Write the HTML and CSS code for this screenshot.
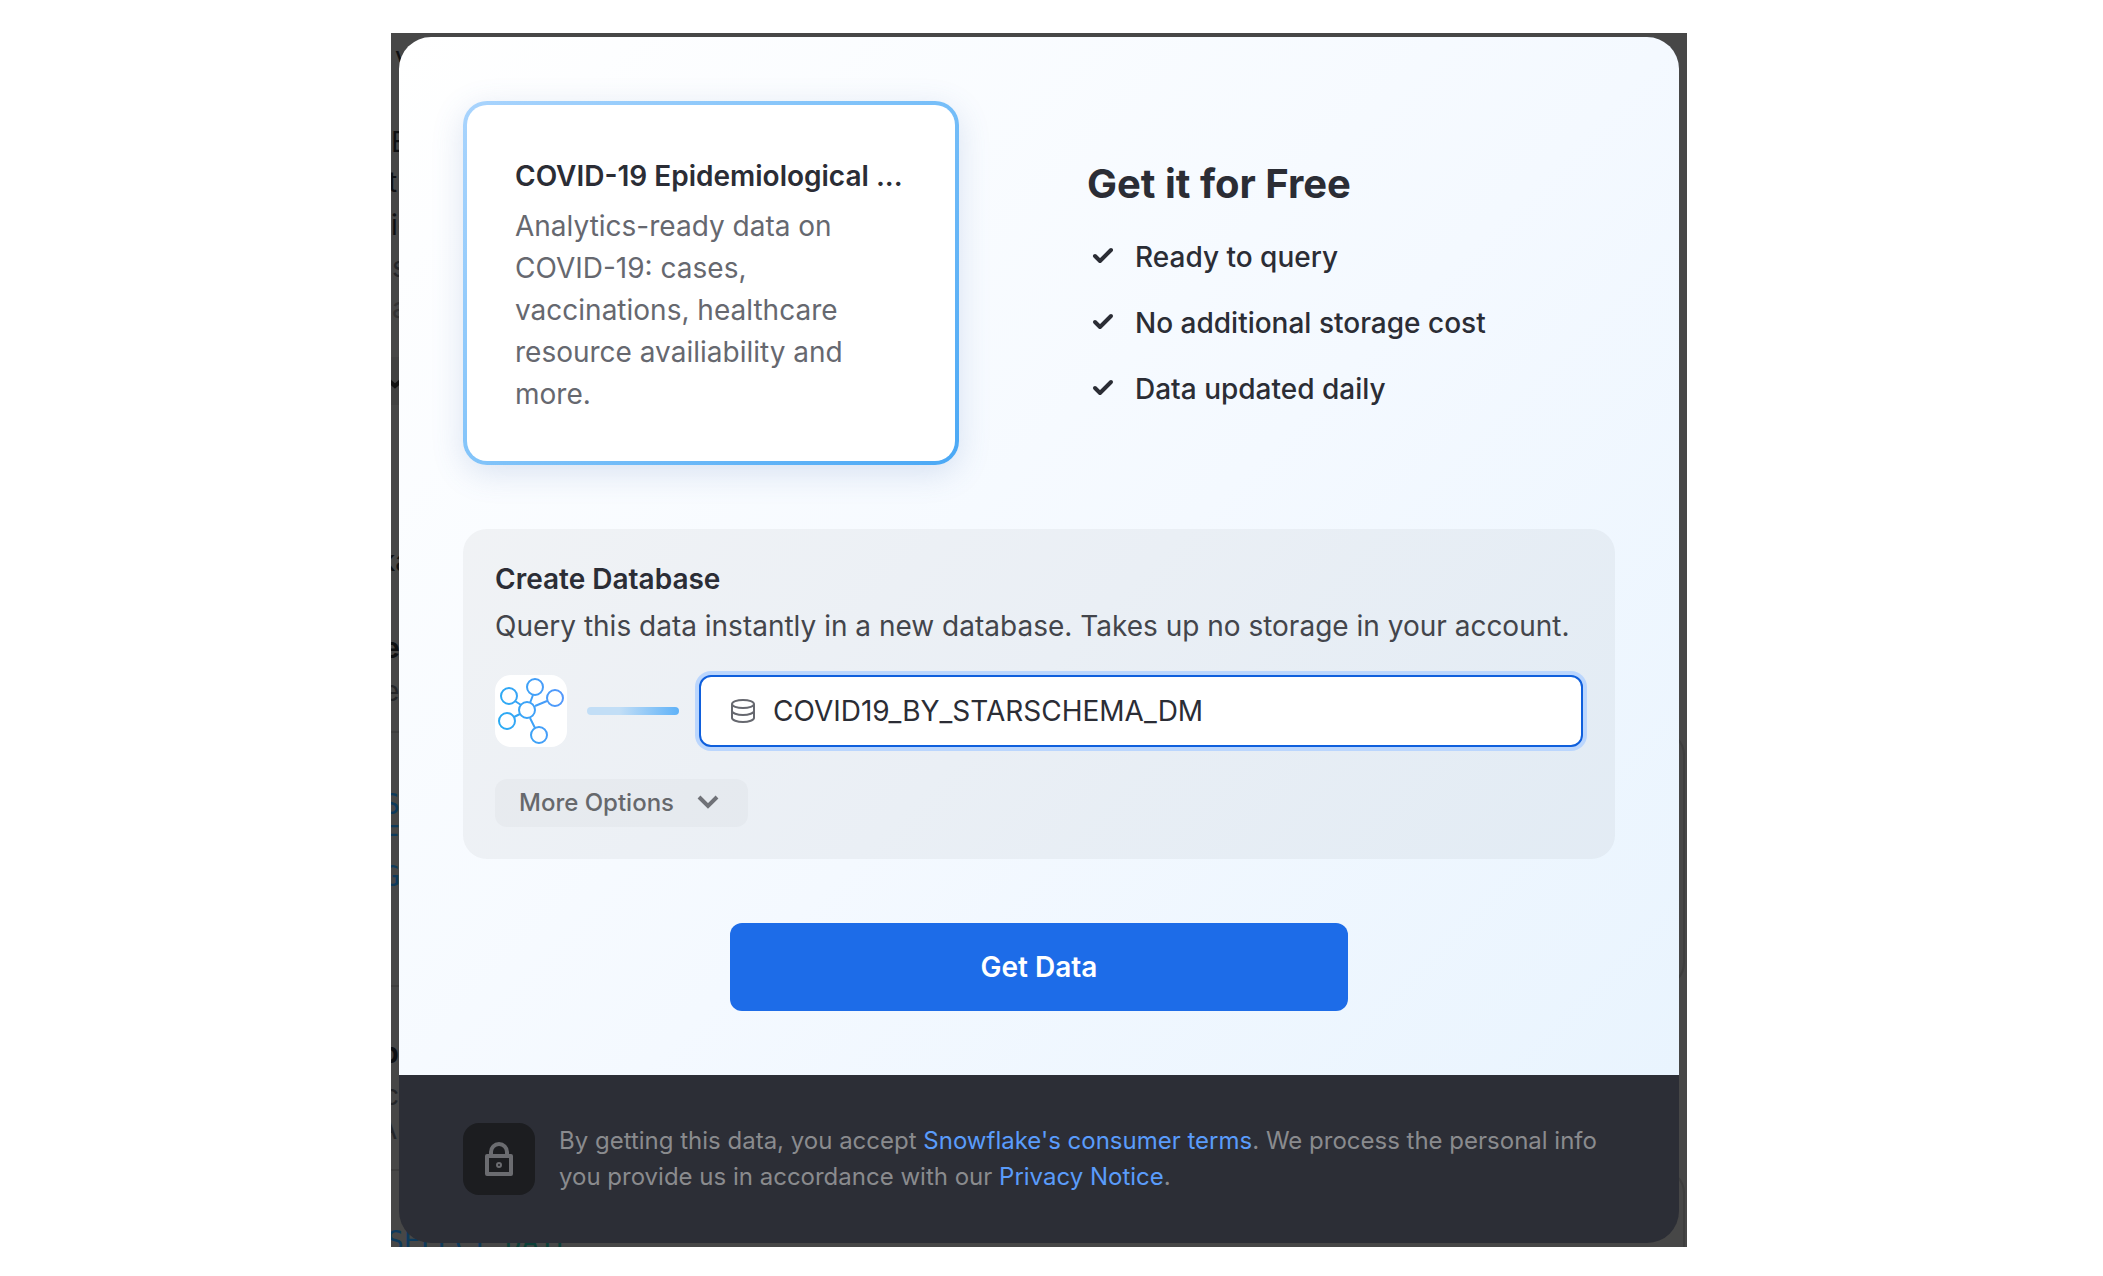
FILE: index.html
```html
<!DOCTYPE html>
<html lang="en">
<head>
<meta charset="utf-8">
<title>Get Data</title>
<link rel="stylesheet" href="styles.css">
</head>
<body>
<div class="stage">
  <div class="backdrop" aria-hidden="true">
    <div class="outline outline-tools"></div>
    <div class="outline outline-query"></div>
    <div class="outline outline-next"></div>
    <span class="ghost" style="left:4px;top:3px">v</span>
    <span class="ghost" style="left:0;top:88px">E</span>
    <span class="ghost" style="left:-3px;top:128px">t</span>
    <span class="ghost" style="left:0;top:171px">ic</span>
    <span class="ghost soft" style="left:1px;top:213px">s</span>
    <span class="ghost faint" style="left:1px;top:254px">a</span>
    <svg class="ghost" style="left:-6px;top:344px" width="20" height="14" viewBox="0 0 20 14"><path d="M2 2l8 7 8-7" fill="none" stroke="#111" stroke-width="4"/></svg>
    <span class="ghost" style="left:-11px;top:507px">ka</span>
    <span class="ghost bold" style="left:-8px;top:594px">e</span>
    <span class="ghost soft" style="left:-8px;top:637px">e</span>
    <span class="ghost code" style="left:-8px;top:751px">S</span>
    <span class="ghost code" style="left:-8px;top:783px">F</span>
    <span class="ghost code" style="left:-8px;top:823px">G</span>
    <span class="ghost bold" style="left:-10px;top:999px">p</span>
    <span class="ghost soft" style="left:-8px;top:1041px">c</span>
    <span class="ghost soft" style="left:-13px;top:1075px">Al</span>
    <span class="ghost code" style="left:-4px;top:1188px">SELECT <b class="date">DATE</b></span>
  </div>
  <main class="modal" role="dialog" aria-labelledby="offer-title">
    <div class="content">
      <section class="summary">
        <article class="listing">
          <h2 class="title">COVID-19 Epidemiological ...</h2>
          <p class="listing-text">Analytics-ready data on COVID-19: cases, vaccinations, healthcare resource availiability and more.</p>
        </article>
        <div class="offer">
          <h1 class="offer-title" id="offer-title">Get it for Free</h1>
          <ul class="benefits">
            <li><svg class="check" viewBox="0 0 24 24"><path d="M4 11l5 5L20 5"/></svg>Ready to query</li>
            <li><svg class="check" viewBox="0 0 24 24"><path d="M4 11l5 5L20 5"/></svg>No additional storage cost</li>
            <li><svg class="check" viewBox="0 0 24 24"><path d="M4 11l5 5L20 5"/></svg>Data updated daily</li>
          </ul>
        </div>
      </section>
      <form class="database">
        <label class="title" for="db-name">Create Database</label>
        <p class="hint">Query this data instantly in a new database. Takes up no storage in your account.</p>
        <div class="name-row">
          <svg class="provider" viewBox="0 0 72 72">
            <defs><linearGradient id="node" gradientUnits="userSpaceOnUse" x1="4" y1="40" x2="68" y2="30"><stop offset="0" stop-color="#2aabf3"/><stop offset="1" stop-color="#5398fb"/></linearGradient></defs>
            <g fill="none" stroke="url(#node)" stroke-width="2">
              <circle cx="32" cy="35" r="8"/><circle cx="14" cy="21" r="8"/><circle cx="40" cy="12" r="8"/><circle cx="60" cy="23" r="8"/><circle cx="12" cy="46" r="8"/><circle cx="44" cy="60" r="8"/>
              <path d="M20 26l6 4M38 20l-3 8M52 26l-12 5M19 42l6-3M35 43l5 10"/>
            </g>
          </svg>
          <span class="connector"></span>
          <div class="field">
            <svg class="db-icon" viewBox="0 0 24 24"><ellipse cx="12" cy="5" rx="11" ry="4"/><path d="M1 5v14c0 2 5 4 11 4s11-2 11-4V5M1 12c0 2 5 4 11 4s11-2 11-4"/></svg>
            <input class="field-input" id="db-name" type="text" value="COVID19_BY_STARSCHEMA_DM">
          </div>
        </div>
        <button class="more" type="button">More Options<svg class="chevron" viewBox="0 0 24 24"><path d="M3 6l9 9 9-9"/></svg></button>
      </form>
      <button class="submit" type="button">Get Data</button>
    </div>
    <footer class="legal">
      <span class="lock"><svg viewBox="0 0 32 36"><path d="M4 15h24v18H4zM8 15v-4a8 8 0 0 1 16 0v4"/><circle cx="16" cy="24" r="2"/></svg></span>
      <p class="legal-text">By getting this data, you accept <a href="#terms">Snowflake's consumer terms</a>. We process the personal info you provide us in accordance with our <a href="#privacy">Privacy Notice</a>.</p>
    </footer>
  </main>
</div>
</body>
</html>
```

FILE: styles.css
```css
* { box-sizing: border-box; }
body {
  margin: 0;
  padding: 33px 416px 29px 391px;
  background: #fff;
  color: #2b2d35;
  font-family: Inter, "Liberation Sans", sans-serif;
  font-size: 28px;
  line-height: 42px;
}
h1, h2, p, ul { margin: 0; padding: 0; }
button, input { font: inherit; }

.stage { position: relative; padding: 4px 8px; background: #474747; }

/* Page behind the dialog */
.backdrop { position: absolute; inset: 0; overflow: hidden; color: #0f1012; }
.ghost { position: absolute; white-space: nowrap; }
.soft { color: #242528; }
.faint { color: #333; }
.bold { font-weight: 700; }
.code { color: #0d3a5c; font-family: "DejaVu Sans Mono", monospace; }
.date { color: #0c4038; font-weight: 400; }
.outline { position: absolute; left: -24px; right: 2px; border: 2px solid #3e3e3e; border-radius: 24px; }
.outline-tools { top: 324px; height: 48px; right: 40px; background: #424242; border: 0; }
.outline-query { top: 698px; height: 256px; }
.outline-next { top: 1136px; height: 240px; }

.modal { position: relative; overflow: hidden; border-radius: 32px; background: #2c2e36; }
.content {
  display: flex;
  flex-direction: column;
  gap: 64px;
  padding: 64px;
  background: linear-gradient(135deg, #fff 0%, #f4f9ff 55%, #e9f4fe 100%);
}
.summary { display: grid; grid-template-columns: 496fr 528fr; gap: 128px; align-items: center; }
.listing {
  padding: 50px 48px 46px;
  border: 4px solid transparent;
  border-radius: 24px;
  background: linear-gradient(#fff, #fff) padding-box, linear-gradient(135deg, #a9d4fd, #7cc1f9 50%, #4aa8f5) border-box;
  box-shadow: 0 8px 32px rgba(70, 110, 180, .18);
}
.title { font-size: 28px; font-weight: 600; }
.listing .title { margin-bottom: 8px; overflow: hidden; white-space: nowrap; }
.listing-text { color: #66686f; }
.offer { padding-top: 4px; }
.offer-title { margin-bottom: 28px; font-size: 40px; line-height: 48px; font-weight: 700; }
.benefits { display: flex; flex-direction: column; gap: 24px; list-style: none; font-weight: 500; }
.benefits li { display: flex; align-items: center; gap: 20px; }
.check { width: 24px; height: 24px; margin-left: 4px; fill: none; stroke: currentColor; stroke-width: 4; stroke-linecap: round; stroke-linejoin: round; }

.database {
  display: flex;
  flex-direction: column;
  align-items: flex-start;
  padding: 32px;
  border-radius: 24px;
  background: rgba(60, 60, 50, .05);
}
.database .title { margin-bottom: 8px; line-height: 36px; }
.hint { margin-bottom: 28px; color: #43454b; white-space: nowrap; }
.name-row { display: flex; align-items: center; align-self: stretch; gap: 20px; margin-bottom: 32px; }
.provider { flex: none; width: 72px; height: 72px; border-radius: 16px; background: #fff; }
.connector { flex: none; width: 92px; height: 8px; border-radius: 4px; background: linear-gradient(90deg, #c2def6 35%, #5fb2f8); }
.field {
  display: flex;
  flex: 1;
  align-items: center;
  gap: 18px;
  height: 72px;
  padding: 0 30px;
  border: 2px solid #0f5fdc;
  border-radius: 12px;
  background: #fff;
  box-shadow: 0 0 0 4px #bbd6fd;
}
.db-icon { flex: none; width: 24px; height: 24px; overflow: visible; fill: none; stroke: #66686f; stroke-width: 2; }
.field-input { flex: 1; min-width: 0; padding: 0; border: 0; outline: 0; background: none; color: #2b2d35; }
.more {
  display: flex;
  align-items: center;
  gap: 22px;
  height: 48px;
  padding: 0 28px 0 24px;
  border: 0;
  border-radius: 12px;
  background: rgba(60, 60, 50, .03);
  color: #66686c;
  font-size: 24px;
  font-weight: 500;
}
.chevron { width: 24px; height: 24px; fill: none; stroke: #707278; stroke-width: 4; }
.submit {
  align-self: center;
  width: 100%;
  max-width: 618px;
  height: 88px;
  border: 0;
  border-radius: 12px;
  background: #1d6ce8;
  color: #fff;
  font-weight: 600;
}

.legal { display: flex; align-items: center; gap: 24px; padding: 48px 64px; }
.lock { display: flex; flex: none; align-items: center; justify-content: center; width: 72px; height: 72px; border-radius: 16px; background: #1c1d20; }
.lock svg { width: 32px; height: 36px; fill: none; stroke: #6b6c70; stroke-width: 4; stroke-linejoin: round; }
.lock circle { stroke-width: 2; }
.legal-text { color: #8a8b8e; font-size: 24px; line-height: 36px; }
.legal a { color: #5a9cfb; text-decoration: none; }
```
